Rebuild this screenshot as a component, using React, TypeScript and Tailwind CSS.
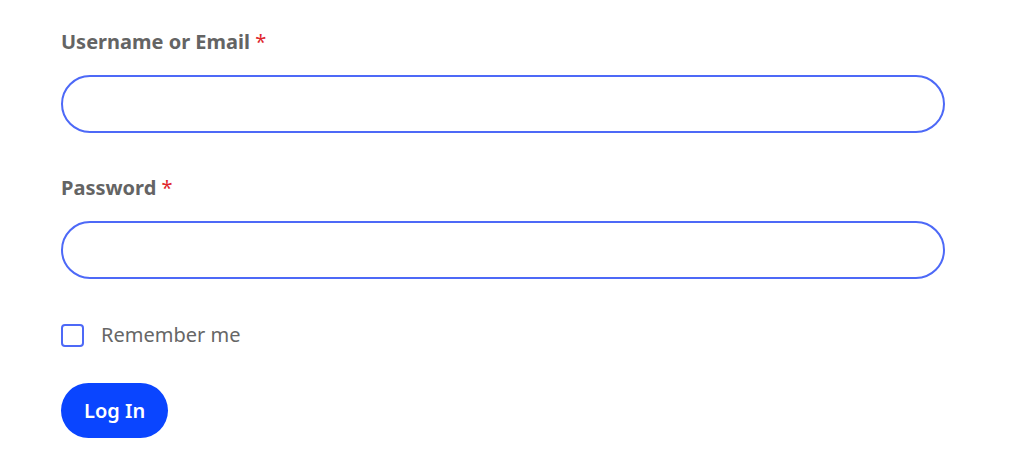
export default function App() {
  return (
    <div className="min-h-[468px] bg-white pl-[61px] pt-[27px] font-['Noto_Sans',sans-serif]">
      <form className="w-[884px]" onSubmit={(e) => e.preventDefault()}>
        <label className="block text-[20px] leading-[30px] font-bold text-[#646464]">
          Username or Email <span className="font-normal text-[#e0262c]">*</span>
        </label>
        <input
          type="text"
          className="mt-[18px] block h-[58px] w-full rounded-full border-2 border-[#4d69f7] px-6 outline-none"
        />

        <label className="mt-[40px] block text-[20px] leading-[30px] font-bold text-[#646464]">
          Password <span className="font-normal text-[#e0262c]">*</span>
        </label>
        <input
          type="password"
          className="mt-[18px] block h-[58px] w-full rounded-full border-2 border-[#4d69f7] px-6 outline-none"
        />

        <div className="mt-[41px] flex items-center gap-[17px]">
          <span className="block h-[23px] w-[23px] rounded-[4px] border-2 border-[#4d69f7]" />
          <span className="text-[20px] leading-[30px] text-[#666]">Remember me</span>
        </div>

        <button
          type="submit"
          className="mt-[33px] h-[55px] rounded-full bg-[#0a45ff] px-[23px] text-[20px] font-semibold text-white"
        >
          Log In
        </button>
      </form>
    </div>
  );
}
